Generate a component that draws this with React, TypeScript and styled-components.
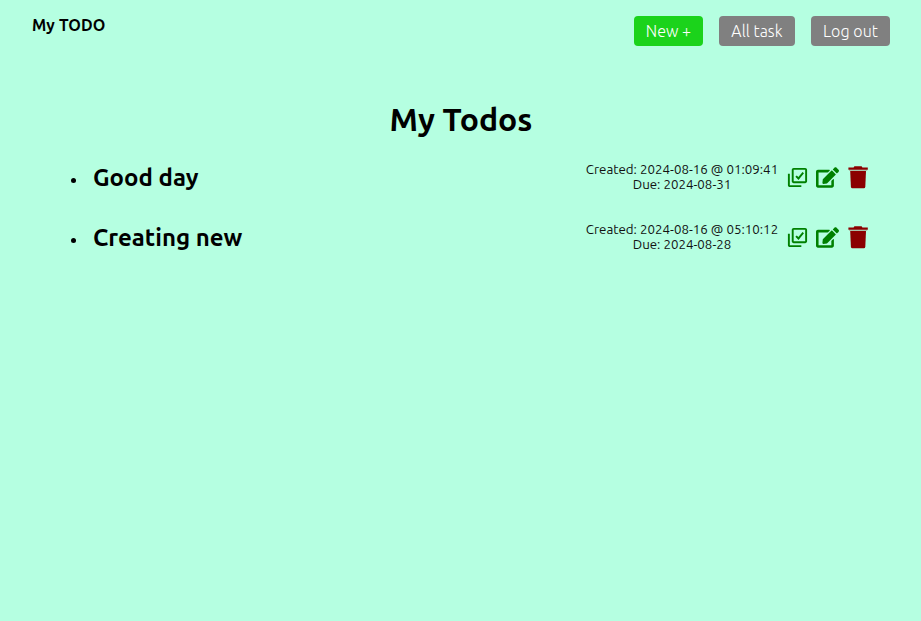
import React from 'react';
import styled, { createGlobalStyle } from 'styled-components';
import { BiSelectMultiple } from 'react-icons/bi';
import { FaEdit } from 'react-icons/fa';

const GlobalStyle = createGlobalStyle`
  * { box-sizing: border-box; }
  body {
    margin: 0;
    min-height: 100vh;
    background: #b5ffe1;
    color: #000;
    font-family: Ubuntu, "Noto Sans", sans-serif;
  }
`;

const Header = styled.header`
  display: flex;
  justify-content: space-between;
  align-items: flex-start;
  height: 62px;
  padding: 16px 31px 0 32px;
`;

const Brand = styled.div`
  font-size: 16px;
  line-height: 18px;
  font-weight: 700;
  letter-spacing: 0.12px;
`;

const Nav = styled.nav`
  display: flex;
  gap: 16px;
`;

const NavButton = styled.button<{ $width: number; $primary?: boolean }>`
  width: ${(p) => p.$width}px;
  height: 30px;
  padding: 0;
  border: 0;
  border-radius: 4px;
  background: ${(p) => (p.$primary ? '#1bd31b' : '#808080')};
  color: #fff;
  font-family: inherit;
  font-size: 16px;
  font-weight: 350;
  line-height: 30px;
  letter-spacing: 0.05px;
`;

const Title = styled.h1`
  margin: 39px 0 25px;
  padding-left: 1px;
  font-size: 32px;
  line-height: 36px;
  font-weight: 600;
  text-align: center;
`;

const List = styled.ul`
  display: flex;
  flex-direction: column;
  gap: 30px;
  margin: 0;
  padding: 0 52px 0 71px;
  list-style: none;
`;

const Item = styled.li`
  display: flex;
  align-items: center;
  height: 30px;
`;

const Bullet = styled.span`
  width: 5px;
  height: 5px;
  margin: 7px 17px 0 0;
  border-radius: 50%;
  background: #000;
`;

const Name = styled.h2`
  flex: 1;
  margin: 2px 0 0;
  font-size: 24px;
  line-height: 28px;
  font-weight: 600;
`;

const Dates = styled.div`
  width: 194px;
  font-size: 13.333px;
  line-height: 15px;
  text-align: center;
  white-space: nowrap;
  color: #111;
`;

const Actions = styled.div`
  display: flex;
  align-items: center;
  margin-left: 7px;
  svg { display: block; color: #008000; }
  svg:nth-child(2) { margin-left: 7px; }
  svg:last-child { margin: 1px 0 0 9px; color: #8b0000; }
`;

function TrashIcon() {
  return (
    <svg width="21" height="23" viewBox="0 0 21 23" fill="currentColor">
      <path d="M5.6 1.6L6.4.2h7.2l.8 1.4h5.4v2.2H.4V1.6z" />
      <path d="M1 3.8h18.2V5H1z" opacity=".25" />
      <path d="M2.2 5h15.8l-.7 15.8q-.1 1.5-1.5 1.5H4.4q-1.4 0-1.5-1.5z" />
    </svg>
  );
}

const todos = [
  { name: 'Good day', created: '2024-08-16 @ 01:09:41', due: '2024-08-31' },
  { name: 'Creating new', created: '2024-08-16 @ 05:10:12', due: '2024-08-28' },
];

export default function App() {
  return (
    <>
      <GlobalStyle />
      <Header>
        <Brand>My TODO</Brand>
        <Nav>
          <NavButton $primary $width={69}>New +</NavButton>
          <NavButton $width={76}>All task</NavButton>
          <NavButton $width={79}>Log out</NavButton>
        </Nav>
      </Header>
      <main>
        <Title>My Todos</Title>
        <List>
          {todos.map((todo) => (
            <Item key={todo.name}>
              <Bullet />
              <Name>{todo.name}</Name>
              <Dates>
                <div>Created: {todo.created}</div>
                <div>Due: {todo.due}</div>
              </Dates>
              <Actions>
                <BiSelectMultiple size={23} />
                <FaEdit size={23} />
                <TrashIcon />
              </Actions>
            </Item>
          ))}
        </List>
      </main>
    </>
  );
}
